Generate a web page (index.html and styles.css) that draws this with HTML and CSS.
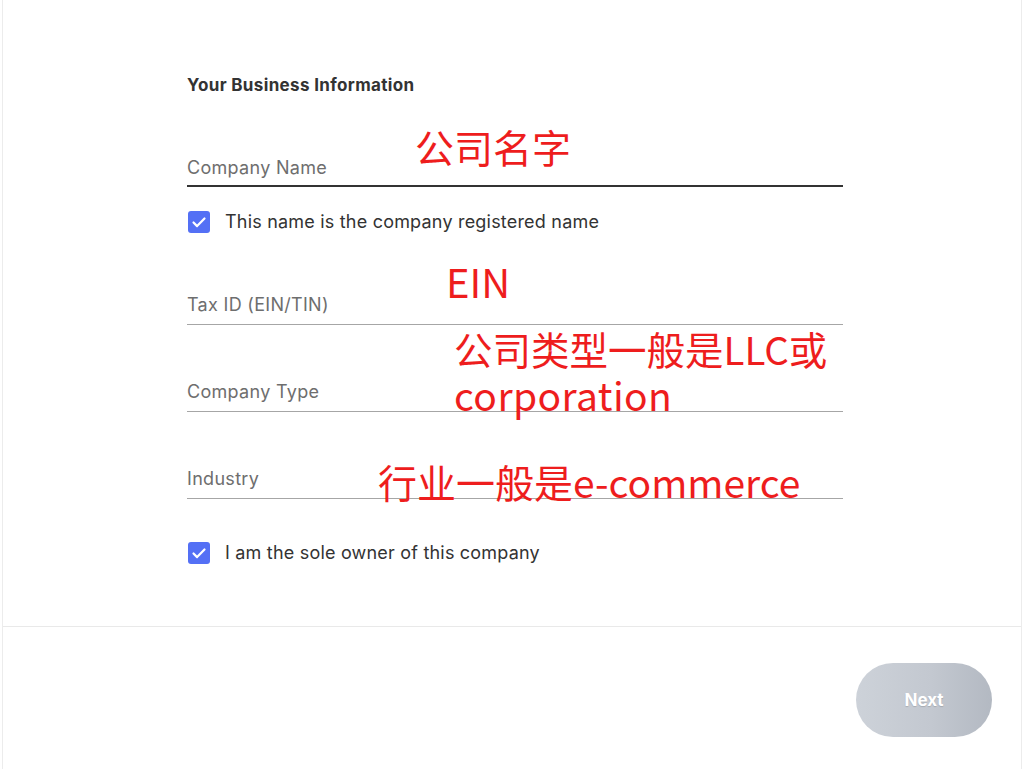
FILE: index.html
```html
<!DOCTYPE html>
<html lang="en">
<head>
<meta charset="utf-8">
<title>Your Business Information</title>
<link rel="stylesheet" href="styles.css">
</head>
<body>
<div class="page">
  <main class="main">
    <form class="form">
      <h2 class="title">Your Business Information</h2>

      <div class="field field-active field-first">
        <span class="label">Company Name</span>
      </div>
      <label class="check check-first">
        <span class="box"><svg viewBox="0 0 22 22" width="22" height="22"><path d="M5.5 11.5l3.6 3.6 7.4-7.6" fill="none" stroke="#fff" stroke-width="2.2" stroke-linecap="round" stroke-linejoin="round"/></svg></span>
        <span class="check-text">This name is the company registered name</span>
      </label>

      <div class="field field-tax">
        <span class="label">Tax ID (EIN/TIN)</span>
      </div>
      <div class="field">
        <span class="label">Company Type</span>
      </div>
      <div class="field">
        <span class="label">Industry</span>
      </div>

      <label class="check check-second">
        <span class="box"><svg viewBox="0 0 22 22" width="22" height="22"><path d="M5.5 11.5l3.6 3.6 7.4-7.6" fill="none" stroke="#fff" stroke-width="2.2" stroke-linecap="round" stroke-linejoin="round"/></svg></span>
        <span class="check-text">I am the sole owner of this company</span>
      </label>
    </form>
  </main>
  <footer class="footer">
    <button class="next" type="button">Next</button>
  </footer>

  <div class="note note-name">公司名字</div>
  <div class="note note-ein">EIN</div>
  <div class="note note-type">公司类型一般是LLC或</div>
  <div class="note note-corp">corporation</div>
  <div class="note note-industry">行业一般是e-commerce</div>
</div>
</body>
</html>
```
FILE: styles.css
```css
* { box-sizing: border-box; }
html, body { margin: 0; padding: 0; background: #fff; }
body {
  font-family: Inter, "Liberation Sans", Arial, sans-serif;
  color: #333;
}
.page {
  position: relative;
  margin: 0 2px;
  min-height: 769px;
  border-left: 1px solid #ececec;
  border-right: 1px solid #ececec;
  display: flex;
  flex-direction: column;
  background: #fff;
}
.main {
  height: 627px;
  border-bottom: 1px solid #e9e9e9;
}
.form {
  width: 656px;
  margin-left: 184px;
  padding-top: 75px;
}
.title {
  margin: 0;
  font-size: 17px;
  line-height: 20px;
  font-weight: 700;
  color: #333;
  letter-spacing: 0.35px;
}
.field {
  margin-top: 55px;
  padding-bottom: 7px;
  border-bottom: 1px solid #a6a6a6;
}
.field-first { margin-top: 61px; padding-bottom: 5px; }
.field-active { border-bottom: 2px solid #333; }
.field-tax { margin-top: 60px; }
.label {
  display: block;
  font-size: 18px;
  line-height: 24px;
  color: #6e6e6e;
  letter-spacing: 0.3px;
}
.check {
  display: flex;
  align-items: center;
  gap: 15px;
  height: 22px;
  padding-left: 1px;
}
.check-first { margin-top: 24px; }
.check-second { margin-top: 43px; }
.box {
  width: 22px;
  height: 22px;
  border-radius: 3px;
  background: #5470f5;
  display: flex;
  flex: none;
}
.check-text {
  font-size: 18px;
  line-height: 22px;
  color: #333;
  letter-spacing: 0.2px;
}
.footer {
  flex: 1;
  display: flex;
  justify-content: flex-end;
  align-items: flex-start;
  padding-top: 36px;
  padding-right: 29px;
}
.next {
  width: 136px;
  height: 74px;
  border: none;
  border-radius: 37px;
  background: linear-gradient(90deg, #cdd2d9 0%, #c3c8d0 55%, #b3b9c2 100%);
  color: #fff;
  font-family: Inter, "Liberation Sans", Arial, sans-serif;
  font-size: 17px;
  font-weight: 700;
  text-shadow: 0 1px 1px rgba(0,0,0,0.15);
  padding: 0;
}
.note {
  position: absolute;
  font-family: "Noto Sans CJK SC", sans-serif;
  font-size: 39px;
  line-height: 40px;
  color: #ee1d1d;
  white-space: nowrap;
}
.note-name { left: 412px; top: 126px; }
.note-ein { left: 443px; top: 261px; font-size: 40px; }
.note-type { left: 451px; top: 328px; font-size: 38.5px; }
.note-corp { left: 451px; top: 374px; letter-spacing: 0.4px; }
.note-industry { left: 375px; top: 461px; }
```
